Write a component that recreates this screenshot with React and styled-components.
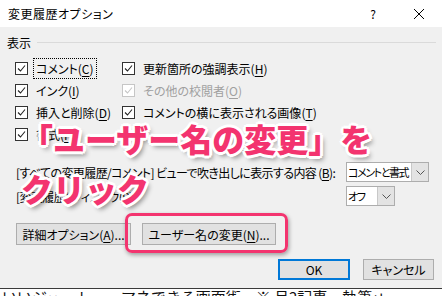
import React from 'react';
import styled, { createGlobalStyle } from 'styled-components';

const GlobalStyle = createGlobalStyle`
  html, body {
    margin: 0;
    padding: 0;
  }

  body {
    width: 442px;
    height: 296px;
    overflow: hidden;
    background: #fff;
    font-family: "Noto Sans CJK JP", "Noto Sans", sans-serif;
  }
`;

const Screen = styled.div`
  position: relative;
  width: 442px;
  height: 296px;
  overflow: hidden;
`;

const Dialog = styled.div`
  height: 288px;
  display: flex;
  flex-direction: column;
  background: #f0f0f0;
  border-bottom: 1px solid #3a3a3a;
  color: #000;
  font-size: 12px;
  font-feature-settings: "palt";
`;

const TitleBar = styled.div`
  height: 27px;
  display: flex;
  align-items: center;
  padding-left: 8px;
  background: #fff;
`;

const Title = styled.span`
  flex: 1;
  font-size: 12px;
  letter-spacing: 0.5px;
`;

const TitleButton = styled.div`
  width: 46px;
  height: 27px;
  display: flex;
  align-items: center;
  justify-content: center;
  font-size: 12px;
`;

const Body = styled.div`
  display: flex;
  flex-direction: column;
  padding: 7px 8px 0 7px;
`;

const SectionHeader = styled.div`
  height: 16px;
  display: flex;
  align-items: center;
  gap: 6px;
  font-size: 12px;

  &::after {
    content: '';
    flex: 1;
    height: 1px;
    margin-right: -2px;
    background: #dadada;
  }
`;

const OptionGrid = styled.div`
  display: flex;
  margin-top: 7px;
  padding-left: 8px;
`;

const OptionColumn = styled.div`
  width: ${(p) => p.$width || 'auto'};
  display: flex;
  flex-direction: column;
`;

const OptionRow = styled.div`
  height: 22px;
  display: flex;
  align-items: center;
  gap: 5px;
  color: ${(p) => (p.$disabled ? '#a0a0a0' : '#000')};
  white-space: nowrap;
`;

const Label = styled.span`
  height: 19px;
  display: flex;
  align-items: center;
  padding: 0 2px;
  border: 1px dotted ${(p) => (p.$focused ? '#000' : 'transparent')};
`;

const Key = styled.span`
  text-decoration: underline;
  text-underline-offset: 2px;
`;

const BalloonGrid = styled.div`
  display: grid;
  grid-template-columns: 339px auto;
  grid-auto-rows: 20px;
  row-gap: 4px;
  margin-top: 17px;
  align-items: center;
`;

const BalloonLabel = styled.span`
  padding-left: 9px;
  white-space: nowrap;
  letter-spacing: -0.6px;
`;

const Combo = styled.div`
  width: ${(p) => p.$width}px;
  height: 20px;
  box-sizing: border-box;
  display: flex;
  border: 1px solid #adadad;
  background: #fff;
`;

const ComboText = styled.span`
  flex: 1;
  display: flex;
  align-items: center;
  padding-left: 1px;
  font-size: 11px;
  letter-spacing: -1.4px;
  white-space: nowrap;
  overflow: hidden;
`;

const ComboArrow = styled.span`
  width: 16px;
  flex-shrink: 0;
  display: flex;
  align-items: center;
  justify-content: center;
  background: #e3e3e3;
  border-left: 1px solid #c8c8c8;
`;

const ButtonRow = styled.div`
  display: flex;
  gap: 11px;
  margin-top: 17px;
  padding-left: 9px;
`;

const Button = styled.div`
  width: ${(p) => p.$width}px;
  height: ${(p) => p.$height || 22}px;
  box-sizing: border-box;
  display: flex;
  align-items: center;
  justify-content: center;
  background: #e1e1e1;
  border: ${(p) => (p.$default ? '2px solid #0078d7' : '1px solid #adadad')};
  font-size: 12px;
  white-space: nowrap;
`;

const Highlight = styled.div`
  position: relative;

  &::after {
    content: '';
    position: absolute;
    top: -10px;
    left: -17px;
    right: -12px;
    bottom: -8px;
    border: 3px solid #f3346f;
    border-radius: 7px;
    box-shadow: 1px 2px 4px rgba(0, 0, 0, 0.35);
  }
`;

const Footer = styled.div`
  display: flex;
  justify-content: flex-end;
  gap: 13px;
  margin-top: 14px;
`;

const DocLine = styled.div`
  height: 7px;
  overflow: hidden;
  padding-left: 2px;
  font-size: 15px;
  line-height: 15px;
  white-space: nowrap;
  color: #111;
`;

const Annotation = styled.div`
  position: absolute;
  left: 21px;
  top: 113px;
  color: #f3346f;
  font-size: 32px;
  font-weight: 900;
  line-height: 50px;
  white-space: nowrap;
  text-shadow:
    3px 0 0 #fff, -3px 0 0 #fff, 0 3px 0 #fff, 0 -3px 0 #fff,
    2px 2px 0 #fff, -2px 2px 0 #fff, 2px -2px 0 #fff, -2px -2px 0 #fff,
    3px 4px 5px rgba(0, 0, 0, 0.45);
`;

const Check = ({ disabled }) => {
  const c = disabled ? '#c6c6c6' : '#333';
  return (
    <svg width="13" height="13" viewBox="0 0 13 13">
      <rect x="0.5" y="0.5" width="12" height="12" fill="#fff" stroke={c} />
      <path d="M3 6.5 L5.5 9 L10 3.5" fill="none" stroke={disabled ? '#c6c6c6' : '#222'} strokeWidth="1.1" />
    </svg>
  );
};

const Chevron = () => (
  <svg width="9" height="5" viewBox="0 0 9 5">
    <path d="M0.5 0.5 L4.5 4.5 L8.5 0.5" fill="none" stroke="#555" />
  </svg>
);

const Close = () => (
  <svg width="10" height="10" viewBox="0 0 10 10">
    <path d="M0 0 L10 10 M10 0 L0 10" stroke="#000" strokeWidth="1" />
  </svg>
);

const Option = ({ text, k, disabled, focused }) => (
  <OptionRow $disabled={disabled}>
    <Check disabled={disabled} />
    <Label $focused={focused}>
      {text}(<Key>{k}</Key>)
    </Label>
  </OptionRow>
);

const App = () => (
  <Screen>
    <GlobalStyle />
    <Dialog>
      <TitleBar>
        <Title>変更履歴オプション</Title>
        <TitleButton>?</TitleButton>
        <TitleButton>
          <Close />
        </TitleButton>
      </TitleBar>
      <Body>
        <SectionHeader>表示</SectionHeader>
        <OptionGrid>
          <OptionColumn $width="107px">
            <Option text="コメント" k="C" focused />
            <Option text="インク" k="I" />
            <Option text="挿入と削除" k="D" />
            <Option text="書式" k="F" />
          </OptionColumn>
          <OptionColumn>
            <Option text="更新箇所の強調表示" k="H" />
            <Option text="その他の校閲者" k="O" disabled />
            <Option text="コメントの横に表示される画像" k="T" />
          </OptionColumn>
        </OptionGrid>
        <BalloonGrid>
          <BalloonLabel>
            [すべての変更履歴/コメント] ビューで吹き出しに表示する内容 (<Key>B</Key>):
          </BalloonLabel>
          <Combo $width={83}>
            <ComboText>コメントと書式</ComboText>
            <ComboArrow>
              <Chevron />
            </ComboArrow>
          </Combo>
          <BalloonLabel>
            [変更履歴] ウィンドウ(<Key>P</Key>):
          </BalloonLabel>
          <Combo $width={49}>
            <ComboText>オフ</ComboText>
            <ComboArrow>
              <Chevron />
            </ComboArrow>
          </Combo>
        </BalloonGrid>
        <ButtonRow>
          <Button $width={115}>
            詳細オプション(<Key>A</Key>)...
          </Button>
          <Highlight>
            <Button $width={134}>
              ユーザー名の変更(<Key>N</Key>)...
            </Button>
          </Highlight>
        </ButtonRow>
        <Footer>
          <Button $width={72} $height={21} $default>
            OK
          </Button>
          <Button $width={71} $height={21}>
            キャンセル
          </Button>
        </Footer>
      </Body>
    </Dialog>
    <DocLine>いいジュート　ーマネできる画面術　※ 月2記事　執筆↵</DocLine>
    <Annotation>
      「ユーザー名の変更」を
      <br />
      クリック
    </Annotation>
  </Screen>
);

export default App;
